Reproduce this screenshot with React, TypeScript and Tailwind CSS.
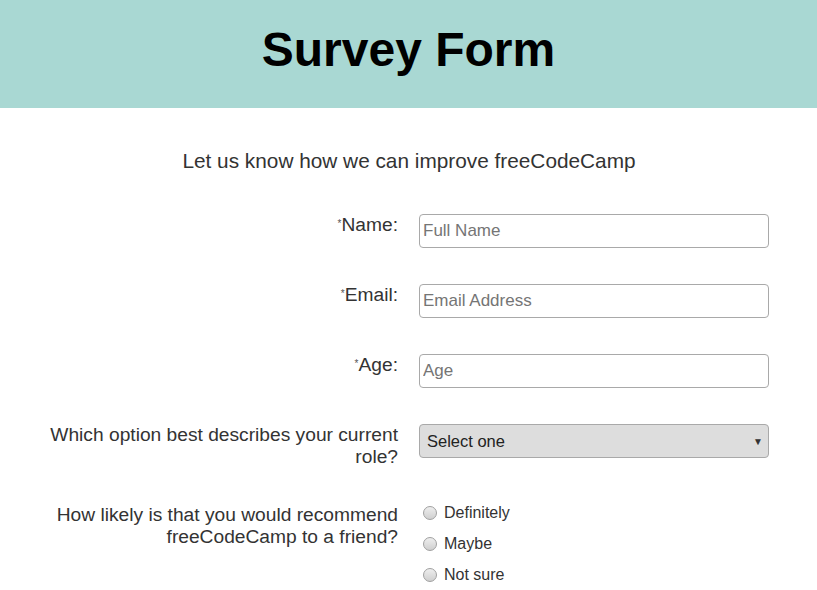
import React from 'react';

const font = { fontFamily: '"Liberation Sans", Arial, sans-serif' };

const Label: React.FC<{ text: string; required?: boolean }> = ({ text, required }) => (
  <label className="w-[360px] ml-[38px] shrink-0 text-right text-[19.2px] leading-[22px] text-[#333]">
    {required && <span className="relative -top-[4px] text-[10px] text-[#555]">*</span>}
    {text}
  </label>
);

const TextField: React.FC<{ placeholder: string; type?: string }> = ({ placeholder, type = 'text' }) => (
  <input
    type={type}
    placeholder={placeholder}
    className="w-[350px] h-[34px] px-[3px] border border-[#a9a9a9] rounded-[4px] bg-white text-[17px] text-[#333] placeholder:text-[#757575] outline-none"
  />
);

const Radio: React.FC<{ label: string }> = ({ label }) => (
  <label className="flex items-center h-[18px] text-[16px] text-[#333]">
    <span className="w-[14px] h-[14px] rounded-full border border-[#a0a0a0] bg-gradient-to-b from-[#eeeeee] to-[#cfcfcf] ml-[4px] mr-[7px]" />
    <span>{label}</span>
  </label>
);

export default function App() {
  return (
    <div className="min-h-[590px] bg-white" style={font}>
      <header className="h-[108px] bg-[#a9d8d3] flex items-center justify-center">
        <h1 className="text-[48px] font-bold text-black leading-none pb-[8px]">Survey Form</h1>
      </header>

      <p className="mt-[41px] text-center text-[20.8px] leading-[24px] text-[#333] pl-[1px]">
        Let us know how we can improve freeCodeCamp
      </p>

      <form className="mt-[41px] flex flex-col gap-[36px]">
        <div className="flex items-start gap-[21px]">
          <Label text="Name:" required />
          <TextField placeholder="Full Name" />
        </div>
        <div className="flex items-start gap-[21px]">
          <Label text="Email:" required />
          <TextField placeholder="Email Address" type="email" />
        </div>
        <div className="flex items-start gap-[21px]">
          <Label text="Age:" required />
          <TextField placeholder="Age" type="number" />
        </div>
        <div className="flex items-start gap-[21px]">
          <Label text="Which option best describes your current role?" />
          <div className="relative w-[350px] h-[34px] border border-[#a9a9a9] rounded-[4px] bg-[#dddddd] flex items-center pl-[7px] text-[16.5px] text-[#222]">
            Select one
            <span className="absolute right-[5px] top-[9px] text-[10px] text-[#333]">▼</span>
          </div>
        </div>
        <div className="flex items-start gap-[21px]">
          <Label text="How likely is that you would recommend freeCodeCamp to a friend?" />
          <div className="flex flex-col gap-[13px]">
            <Radio label="Definitely" />
            <Radio label="Maybe" />
            <Radio label="Not sure" />
          </div>
        </div>
      </form>
    </div>
  );
}
